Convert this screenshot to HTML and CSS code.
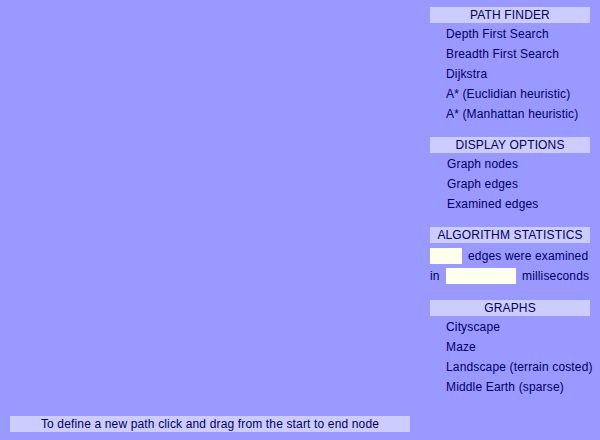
FILE: index.html
```html
<!DOCTYPE html>
<html>
<head>
<meta charset="utf-8">
<link rel="stylesheet" href="styles.css">
</head>
<body>
<div class="app">
  <div class="canvas">
    <div class="status">To define a new path click and drag from the start to end node</div>
  </div>
  <div class="sidebar">
    <div class="section">
      <div class="bar">PATH FINDER</div>
      <div class="item">Depth First Search</div>
      <div class="item">Breadth First Search</div>
      <div class="item">Dijkstra</div>
      <div class="item">A* (Euclidian heuristic)</div>
      <div class="item">A* (Manhattan heuristic)</div>
    </div>
    <div class="section">
      <div class="bar">DISPLAY OPTIONS</div>
      <div class="item opt">Graph nodes</div>
      <div class="item opt">Graph edges</div>
      <div class="item opt">Examined edges</div>
    </div>
    <div class="section stats">
      <div class="bar">ALGORITHM STATISTICS</div>
      <div class="stat"><span class="box small"></span><span>edges were examined</span></div>
      <div class="stat"><span class="in">in</span><span class="box wide"></span><span>milliseconds</span></div>
    </div>
    <div class="section">
      <div class="bar">GRAPHS</div>
      <div class="item">Cityscape</div>
      <div class="item">Maze</div>
      <div class="item">Landscape (terrain costed)</div>
      <div class="item">Middle Earth (sparse)</div>
    </div>
  </div>
</div>
</body>
</html>
```
FILE: styles.css
```css
html, body {
  margin: 0;
  padding: 0;
  background: #9999ff;
}
body {
  font-family: "Liberation Sans", Arial, sans-serif;
  font-size: 12px;
  letter-spacing: 0.15px;
  color: #000066;
  width: 600px;
  height: 440px;
  overflow: hidden;
}
.app {
  display: flex;
  height: 440px;
}
.canvas {
  width: 430px;
  display: flex;
  flex-direction: column;
  justify-content: flex-end;
  padding: 0 0 8px 10px;
  box-sizing: border-box;
}
.status {
  width: 400px;
  height: 16px;
  line-height: 17px;
  background: #ccccff;
  text-align: center;
}
.sidebar {
  width: 170px;
  padding-top: 7px;
  display: flex;
  flex-direction: column;
  gap: 14px;
}
.bar {
  width: 160px;
  height: 16px;
  line-height: 17px;
  background: #ccccff;
  text-align: center;
}
.item {
  height: 20px;
  line-height: 22px;
  padding-left: 16px;
}
.item.opt {
  padding-left: 17px;
}
.stats .bar {
  margin-bottom: 3px;
}
.stat {
  height: 20px;
  display: flex;
  align-items: center;
  gap: 6px;
  white-space: nowrap;
}
.box {
  display: block;
  height: 16px;
  background: #ffffee;
}
.box.small { width: 32px; }
.box.wide { width: 70px; }
.in { width: 10px; }
```
